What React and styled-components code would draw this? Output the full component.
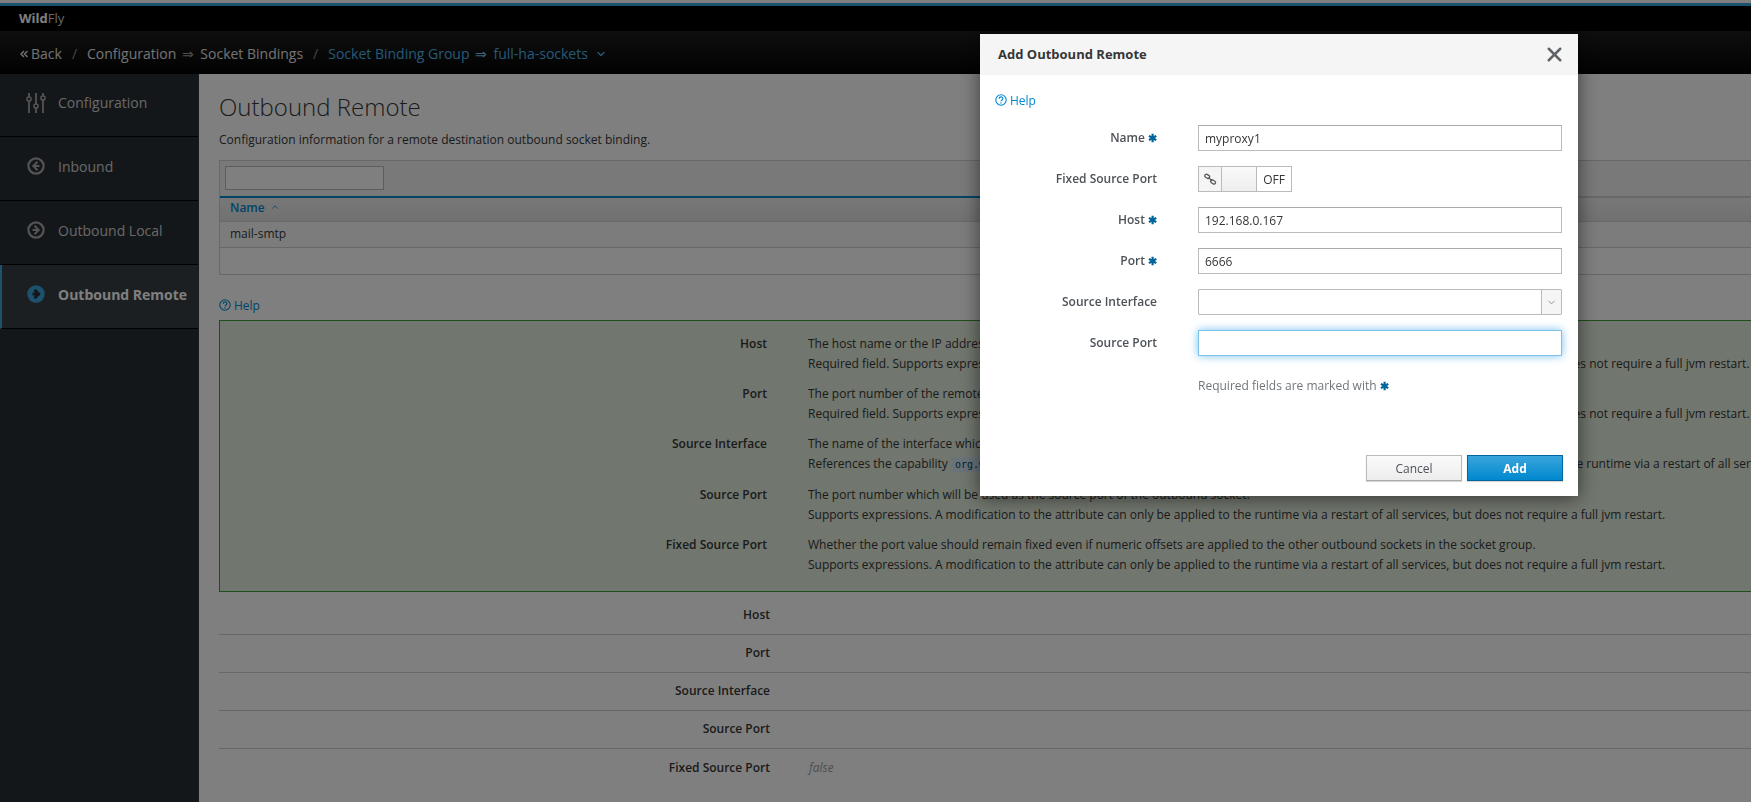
import React from "react";
import styled, { createGlobalStyle } from "styled-components";
import { ChevronDown, ChevronUp, ChevronsLeft, X } from "lucide-react";

const GlobalStyle = createGlobalStyle`
  html, body {
    margin: 0;
    padding: 0;
    height: 100%;
    overflow: hidden;
    background: #fff;
    font-family: "Open Sans", "Liberation Sans", sans-serif;
    font-size: 12px;
    color: #363636;
  }
  * {
    box-sizing: border-box;
  }
`;

const navItems = [
  { label: "Configuration", icon: "sliders" },
  { label: "Inbound", icon: "left" },
  { label: "Outbound Local", icon: "right" },
  { label: "Outbound Remote", icon: "right", active: true },
];

const RESTART =
  "A modification to the attribute can only be applied to the runtime via a restart of all services, but does not require a full jvm restart.";

const helpRows = [
  {
    label: "Host",
    first: "The host name or the IP address of the remote destination.",
    second: `Required field. Supports expressions. ${RESTART}`,
  },
  {
    label: "Port",
    first: "The port number of the remote destination.",
    second: `Required field. Supports expressions. ${RESTART}`,
  },
  {
    label: "Source Interface",
    first: "The name of the interface which will be used for the source address of the outbound socket.",
    capability: "org.wildfly.network.interface",
    second: `Supports expressions. ${RESTART}`,
  },
  {
    label: "Source Port",
    first: "The port number which will be used as the source port of the outbound socket.",
    second: `Supports expressions. ${RESTART}`,
  },
  {
    label: "Fixed Source Port",
    first: "Whether the port value should remain fixed even if numeric offsets are applied to the other outbound sockets in the socket group.",
    second: `Supports expressions. ${RESTART}`,
  },
];

const attributes = [
  { label: "Host" },
  { label: "Port" },
  { label: "Source Interface" },
  { label: "Source Port" },
  { label: "Fixed Source Port", value: "false" },
];

const NavIcon = ({ type, active }) => {
  if (type === "sliders") {
    return (
      <svg width="20" height="20" viewBox="0 0 20 20" fill="none" stroke="#a8a8a8" strokeWidth="1.8">
        <path d="M3 0v20M10 0v20M17 0v20" />
        <circle cx="3" cy="6" r="2.1" fill="#292e34" strokeWidth="1.5" />
        <circle cx="10" cy="13" r="2.1" fill="#292e34" strokeWidth="1.5" />
        <circle cx="17" cy="5" r="2.1" fill="#292e34" strokeWidth="1.5" />
      </svg>
    );
  }
  const arrow = type === "left" ? "M11.5 5.8 7.3 10l4.2 4.2M7.3 10h6.2" : "M8.5 5.8 12.7 10l-4.2 4.2M12.7 10H6.5";
  return (
    <svg width="20" height="20" viewBox="0 0 20 20" fill="none">
      {active ? (
        <>
          <circle cx="10" cy="10" r="8.7" fill="#39a5dc" />
          <path d={arrow} stroke="#292e34" strokeWidth="3" />
        </>
      ) : (
        <>
          <circle cx="10" cy="10" r="7.6" stroke="#a8a8a8" strokeWidth="2.2" />
          <path d={arrow} stroke="#a8a8a8" strokeWidth="2" />
        </>
      )}
    </svg>
  );
};

const HelpGlyph = () => (
  <svg width="12" height="12" viewBox="0 0 12 12" fill="none" stroke="currentColor">
    <circle cx="6" cy="6" r="5.2" strokeWidth="1.1" />
    <path d="M4.2 4.7c0-2.3 3.7-2.3 3.7-.1 0 1.4-1.9 1.3-1.9 2.7" strokeWidth="1.2" />
    <path d="M6 8.2v1.2" strokeWidth="1.2" />
  </svg>
);

const LinkGlyph = () => (
  <svg width="13" height="13" viewBox="0 0 13 13" fill="none" stroke="#5a5a5a" strokeWidth="1.3">
    <path d="M3.1 1.4 5 2.6a1.6 1.6 0 0 1 .4 2.1 1.6 1.6 0 0 1-2.1.6L1.6 4.2A1.5 1.5 0 0 1 3.1 1.4Z" />
    <path d="M8.9 7 10.9 8.2a1.6 1.6 0 0 1 .5 2.1 1.6 1.6 0 0 1-2.2.6L7.4 9.8A1.5 1.5 0 0 1 8.9 7Z" />
    <path d="M4.6 4.6 8.2 8" />
  </svg>
);

const App = () => {
  return (
    <>
      <GlobalStyle />
      <Page>
        <TopBar>
          <Brand>
            <b>Wild</b>Fly
          </Brand>
        </TopBar>
        <Breadcrumb>
          <BackLink>
            <ChevronsLeft size={12} strokeWidth={3} />
            Back
          </BackLink>
          <Slash>/</Slash>
          <span>Configuration</span>
          <Arrow>⇒</Arrow>
          <span>Socket Bindings</span>
          <Slash>/</Slash>
          <Crumb>Socket Binding Group</Crumb>
          <Arrow $blue>⇒</Arrow>
          <Crumb>full-ha-sockets</Crumb>
          <Caret>
            <ChevronDown size={12} strokeWidth={2.6} />
          </Caret>
        </Breadcrumb>
        <Body>
          <Sidebar>
            {navItems.map((item) => (
              <NavItem key={item.label} $active={item.active}>
                <IconSlot>
                  <NavIcon type={item.icon} active={item.active} />
                </IconSlot>
                {item.label}
              </NavItem>
            ))}
          </Sidebar>
          <Content>
            <Title>Outbound Remote</Title>
            <Description>Configuration information for a remote destination outbound socket binding.</Description>
            <Table>
              <TableTools>
                <FilterInput readOnly />
              </TableTools>
              <TableHead>
                <SortedColumn>
                  Name <ChevronUp size={10} />
                </SortedColumn>
              </TableHead>
              <TableRow>mail-smtp</TableRow>
              <EmptyRow />
            </Table>
            <HelpLink>
              <HelpGlyph /> Help
            </HelpLink>
            <HelpBox>
              {helpRows.map((row) => (
                <HelpRow key={row.label}>
                  <HelpLabel>{row.label}</HelpLabel>
                  <HelpText>
                    <HelpLine>{row.first}</HelpLine>
                    <HelpLine>
                      {row.capability ? (
                        <>
                          References the capability <Code>{row.capability}</Code>.{" "}
                        </>
                      ) : null}
                      {row.second}
                    </HelpLine>
                  </HelpText>
                </HelpRow>
              ))}
            </HelpBox>
            <Attributes>
              {attributes.map((attr) => (
                <AttributeRow key={attr.label}>
                  <AttributeLabel>{attr.label}</AttributeLabel>
                  <AttributeValue>{attr.value}</AttributeValue>
                </AttributeRow>
              ))}
            </Attributes>
          </Content>
        </Body>
      </Page>
      <Backdrop />
      <Modal>
        <ModalHeader>
          <ModalTitle>Add Outbound Remote</ModalTitle>
          <CloseButton>
            <X size={23} strokeWidth={2.6} />
          </CloseButton>
        </ModalHeader>
        <ModalBody>
          <ModalHelp>
            <HelpGlyph /> Help
          </ModalHelp>
          <Form>
            <FormLabel>
              Name <Star>✱</Star>
            </FormLabel>
            <TextInput defaultValue="myproxy1" />
            <FormLabel>Fixed Source Port</FormLabel>
            <Switch>
              <SwitchIcon>
                <LinkGlyph />
              </SwitchIcon>
              <SwitchHandle />
              <SwitchState>OFF</SwitchState>
            </Switch>
            <FormLabel>
              Host <Star>✱</Star>
            </FormLabel>
            <TextInput defaultValue="192.168.0.167" />
            <FormLabel>
              Port <Star>✱</Star>
            </FormLabel>
            <TextInput defaultValue="6666" />
            <FormLabel>Source Interface</FormLabel>
            <SelectBox>
              <SelectCaret>
                <ChevronDown size={11} strokeWidth={1.6} />
              </SelectCaret>
            </SelectBox>
            <FormLabel>Source Port</FormLabel>
            <FocusedInput />
          </Form>
          <RequiredNote>
            Required fields are marked with <Star>✱</Star>
          </RequiredNote>
        </ModalBody>
        <ModalFooter>
          <CancelButton>Cancel</CancelButton>
          <PrimaryButton>Add</PrimaryButton>
        </ModalFooter>
      </Modal>
    </>
  );
};

export default App;

const Page = styled.div`
  width: 1751px;
  height: 802px;
  display: flex;
  flex-direction: column;
  overflow: hidden;
  border-top: 3px solid #fff;
`;

const TopBar = styled.header`
  height: 28px;
  flex-shrink: 0;
  display: flex;
  align-items: center;
  padding-left: 19px;
  background: #000;
  border-top: 3px solid #39a5dc;
`;

const Brand = styled.div`
  font-size: 13px;
  color: #d1d1d1;
  margin-top: -1px;

  b {
    font-weight: 700;
    color: #fff;
  }
`;

const Breadcrumb = styled.nav`
  height: 43px;
  flex-shrink: 0;
  display: flex;
  align-items: center;
  gap: 6px;
  padding: 2px 0 0 18px;
  background: linear-gradient(#1e1e1e, #030303);
  color: #e4e4e4;
  font-size: 14px;
`;

const BackLink = styled.span`
  display: inline-flex;
  align-items: center;
  gap: 1px;
`;

const Slash = styled.span`
  margin: 0 4px;
  color: #8b8d8f;
`;

const Arrow = styled.span`
  color: ${({ $blue }) => ($blue ? "#7dc3e8" : "#9c9c9c")};
`;

const Crumb = styled.span`
  display: inline-flex;
  align-items: center;
  color: #4fb3e8;
`;

const Caret = styled(Crumb)`
  margin-left: 1px;
`;

const Body = styled.div`
  flex: 1;
  display: flex;
  min-height: 0;
`;

const Sidebar = styled.aside`
  width: 199px;
  flex-shrink: 0;
  background: #292e34;
  border-right: 1px solid #30353a;
`;

const NavItem = styled.div`
  height: 64px;
  display: flex;
  align-items: center;
  padding-left: ${({ $active }) => ($active ? "24px" : "26px")};
  padding-bottom: 5px;
  border-left: ${({ $active }) => ($active ? "2px solid #39a5dc" : "none")};
  border-bottom: 1px solid #000;
  background: ${({ $active }) => ($active ? "#393f44" : "transparent")};
  color: ${({ $active }) => ($active ? "#fff" : "#d1d1d1")};
  font-size: 14px;
  font-weight: ${({ $active }) => ($active ? 700 : 400)};

  &:first-child {
    height: 63px;
  }
`;

const IconSlot = styled.span`
  width: 32px;
  display: flex;
  align-items: center;
`;

const Content = styled.main`
  flex: 1;
  min-width: 0;
  padding: 18px 0 0 20px;
  overflow: hidden;
  background: #fff;
`;

const Title = styled.h1`
  margin: 0;
  font-size: 24px;
  font-weight: 300;
  line-height: 30px;
  color: #363636;
`;

const Description = styled.p`
  margin: 10px 0 0;
  font-size: 12px;
  line-height: 16px;
`;

const Table = styled.section`
  margin-top: 12px;
  border: 1px solid #d1d1d1;
  border-right: none;
`;

const TableTools = styled.div`
  height: 35px;
  padding: 5px 0 0 5px;
  background: #f2f2f2;
`;

const FilterInput = styled.input`
  display: block;
  width: 159px;
  height: 24px;
  border: 1px solid #bbb;
  background: #fff;
  outline: none;
`;

const TableHead = styled.div`
  height: 26px;
  border-top: 2px solid #d1d1d1;
  border-bottom: 1px solid #d1d1d1;
  background: linear-gradient(#f0f0f0, #e2e2e2);
`;

const SortedColumn = styled.div`
  width: 1000px;
  height: 25px;
  display: flex;
  align-items: center;
  gap: 5px;
  margin-top: -2px;
  padding: 0 0 5px 10px;
  border-top: 2px solid #0088ce;
  color: #0088ce;
  font-weight: 600;
`;

const TableRow = styled.div`
  height: 26px;
  display: flex;
  align-items: center;
  padding: 0 0 2px 10px;
  border-bottom: 1px solid #d1d1d1;
  background: #f9f9f9;
`;

const EmptyRow = styled.div`
  height: 26px;
  background: #fff;
`;

const HelpLink = styled.div`
  margin-top: 21px;
  height: 18px;
  display: flex;
  align-items: center;
  gap: 3px;
  color: #0088ce;
`;

const HelpBox = styled.section`
  margin-top: 6px;
  width: 1600px;
  height: 272px;
  padding: 13px 0 0;
  border: 1px solid #3f9c35;
  background: #e2ecdc;
`;

const HelpRow = styled.div`
  display: grid;
  grid-template-columns: 547px 1fr;
  column-gap: 41px;
  margin-bottom: 10px;
`;

const HelpLabel = styled.div`
  text-align: right;
  font-weight: 600;
  line-height: 20px;
`;

const HelpText = styled.div`
  min-width: 0;
  white-space: nowrap;
`;

const HelpLine = styled.div`
  line-height: 20px;
`;

const Code = styled.code`
  padding: 2px 4px;
  background: #d4e7f3;
  color: #004368;
  font-family: "DejaVu Sans Mono", monospace;
  font-size: 10px;
`;

const Attributes = styled.section`
  margin-top: 5px;
`;

const AttributeRow = styled.div`
  height: 38px;
  display: grid;
  grid-template-columns: 551px 1fr;
  column-gap: 39px;
  align-items: center;
  padding-bottom: 2px;
  border-bottom: 1px solid #d1d1d1;

  &:last-child {
    border-bottom: none;
  }
`;

const AttributeLabel = styled.div`
  text-align: right;
  font-weight: 600;
`;

const AttributeValue = styled.div`
  color: #9c9c9c;
  font-style: italic;
`;

const Backdrop = styled.div`
  position: fixed;
  inset: 0;
  background: rgba(0, 0, 0, 0.5);
`;

const Modal = styled.div`
  position: fixed;
  left: 980px;
  top: 34px;
  width: 598px;
  height: 462px;
  display: flex;
  flex-direction: column;
  background: #fff;
  box-shadow: 0 2px 18px rgba(0, 0, 0, 0.55);
`;

const ModalHeader = styled.div`
  height: 41px;
  flex-shrink: 0;
  display: flex;
  align-items: center;
  justify-content: space-between;
  padding: 0 12px 0 18px;
  background: #f5f5f5;
`;

const ModalTitle = styled.div`
  margin-top: -2px;
  font-size: 13px;
  font-weight: 700;
  color: #363636;
`;

const CloseButton = styled.span`
  display: flex;
  color: #5f6368;
`;

const ModalBody = styled.div`
  flex: 1;
  padding: 16px 16px 0 15px;
`;

const ModalHelp = styled(HelpLink)`
  margin-top: 0;
  color: #0088ce;
`;

const Form = styled.div`
  margin-top: 16px;
  display: grid;
  grid-template-columns: 162px 1fr;
  column-gap: 41px;
  row-gap: 15px;
  align-items: center;
`;

const FormLabel = styled.div`
  text-align: right;
  font-weight: 600;
  line-height: 16px;
  color: #4d5258;
`;

const Star = styled.span`
  color: #00659c;
  font-size: 11px;
  font-weight: 700;
  line-height: 1;
`;

const TextInput = styled.input`
  display: block;
  width: 100%;
  height: 26px;
  padding: 0 6px;
  border: 1px solid #bbb;
  border-top-color: #aaa;
  outline: none;
  background: #fff;
  color: #363636;
  font-family: inherit;
  font-size: 12px;
`;

const FocusedInput = styled(TextInput)`
  border-color: #7dc3e8;
  box-shadow: 0 0 9px rgba(82, 176, 236, 0.8);
`;

const Switch = styled.div`
  width: 94px;
  height: 26px;
  display: flex;
  border: 1px solid #bbb;
  background: #fff;
`;

const SwitchIcon = styled.div`
  width: 23px;
  display: flex;
  align-items: center;
  justify-content: center;
  background: #f5f5f5;
  border-right: 1px solid #bbb;
`;

const SwitchHandle = styled.div`
  width: 35px;
  background: linear-gradient(#fafafa, #ededed);
  border-right: 1px solid #bbb;
`;

const SwitchState = styled.div`
  flex: 1;
  display: flex;
  align-items: center;
  justify-content: center;
  color: #363636;
`;

const SelectBox = styled.div`
  height: 26px;
  display: flex;
  justify-content: flex-end;
  border: 1px solid #bbb;
  border-radius: 1px;
  background: #fff;
`;

const SelectCaret = styled.div`
  width: 20px;
  display: flex;
  align-items: center;
  justify-content: center;
  border-left: 1px solid #bbb;
  background: #f5f5f5;
  color: #72767b;
`;

const RequiredNote = styled.div`
  margin: 22px 0 0 203px;
  line-height: 16px;
  color: #72767b;
`;

const ModalFooter = styled.div`
  display: flex;
  justify-content: flex-end;
  gap: 5px;
  padding: 0 15px 15px 0;
`;

const CancelButton = styled.button`
  width: 96px;
  height: 26px;
  border: 1px solid #bbb;
  border-bottom-color: #aaa;
  background: linear-gradient(#fafafa, #ededed);
  color: #4d5258;
  font-family: inherit;
  font-size: 12px;
  font-weight: 400;
  box-shadow: 0 1px 1px rgba(0, 0, 0, 0.15);
`;

const PrimaryButton = styled(CancelButton)`
  border: 1px solid #00659c;
  background: linear-gradient(#39a5dc, #0088ce);
  color: #fff;
  font-weight: 700;
`;
